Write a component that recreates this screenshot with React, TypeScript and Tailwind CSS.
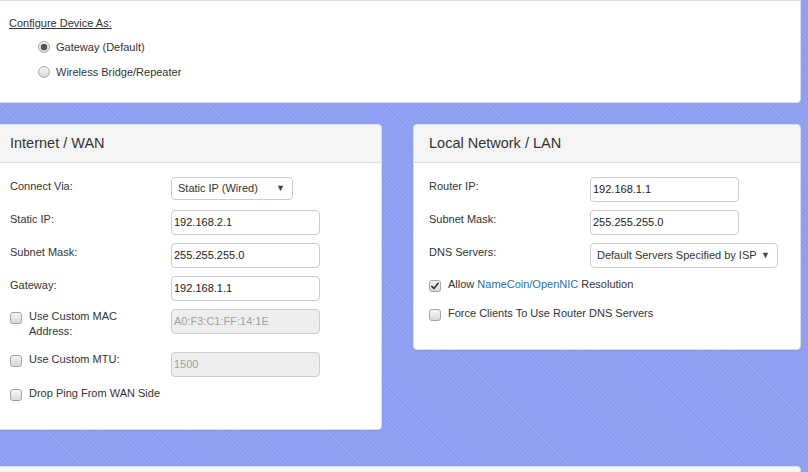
import type { ReactNode } from "react";

const Radio = ({ checked }: { checked?: boolean }) => (
  <span className="flex h-[12px] w-[12px] items-center justify-center rounded-full border border-[#a9a9a9] bg-[linear-gradient(#f4f4f4,#d9d9d9)] shadow-[inset_0_1px_1px_rgba(255,255,255,0.8)]">
    {checked && <span className="h-[6px] w-[6px] rounded-full bg-[#555] shadow-[0_0_1px_#333]" />}
  </span>
);

const Check = ({ checked }: { checked?: boolean }) => (
  <span className="flex h-[12px] w-[12px] shrink-0 items-center justify-center rounded-[3px] border border-[#a5a5a5] bg-[linear-gradient(#f5f5f5,#d9d9d9)]">
    {checked && (
      <svg viewBox="0 0 12 12" className="h-[10px] w-[10px]">
        <path d="M2.2 6.4 L4.8 9 L9.8 2.8" fill="none" stroke="#333" strokeWidth="2" strokeLinecap="round" strokeLinejoin="round" />
      </svg>
    )}
  </span>
);

const Input = ({ value, disabled, w = "w-[149px]" }: { value: string; disabled?: boolean; w?: string }) => (
  <div
    className={`${w} flex h-[25px] items-center rounded-[4px] border border-[#ccc] px-[2px] text-[11px] ${
      disabled ? "bg-[#eee] text-[#a0a0a0]" : "bg-white text-[#222]"
    }`}
  >
    {value}
  </div>
);

const Select = ({ value, w, h }: { value: string; w: string; h: string }) => (
  <div className={`${w} ${h} flex items-center justify-between rounded-[4px] border border-[#ccc] bg-white pl-[6px] pr-[7px] text-[11px] text-[#333]`}>
    <span>{value}</span>
    <span className="text-[9px] text-[#444]">▼</span>
  </div>
);

const Row = ({ label, h, children }: { label: ReactNode; h: string; children: ReactNode }) => (
  <div className={`flex ${h}`}>
    <div className="w-[161px] pt-[2px] leading-[15px]">{label}</div>
    {children}
  </div>
);

const CheckRow = ({ checked, h, children }: { checked?: boolean; h: string; children: ReactNode }) => (
  <div className={`flex ${h} gap-[7px]`}>
    <div className="pt-[3px]">
      <Check checked={checked} />
    </div>
    <div className="leading-[15px]">{children}</div>
  </div>
);

const Panel = ({ title, className, children }: { title: string; className: string; children: ReactNode }) => (
  <div className={`${className} rounded-[4px] border border-[#ddd] bg-white shadow-[0_1px_1px_rgba(0,0,0,0.05)]`}>
    <div className="flex h-[38px] items-center rounded-t-[4px] border-b border-[#ddd] bg-[#f5f5f5] px-[15px] text-[14.5px] text-[#333]">
      {title}
    </div>
    <div className="px-[15px]">{children}</div>
  </div>
);

export default function App() {
  return (
    <div className="h-[472px] w-[808px] overflow-hidden bg-[#8a9df0] bg-[image:repeating-linear-gradient(45deg,#899cef_0px,#899cef_1.5px,#92a4f2_1.5px,#92a4f2_3px)] font-['Liberation_Sans',Arial,sans-serif] text-[11px] text-[#333]">
      {/* device mode */}
      <div className="-ml-[6px] h-[103px] w-[807px] rounded-b-[4px] border border-[#ddd] bg-white pl-[14px] pt-[15px]">
        <div className="leading-[15px] underline">Configure Device As:</div>
        <div className="ml-[29px] mt-[8px] flex items-center gap-[6px]">
          <Radio checked />
          <span>Gateway (Default)</span>
        </div>
        <div className="ml-[29px] mt-[8px] flex items-center gap-[6px]">
          <Radio />
          <span>Wireless Bridge/Repeater</span>
        </div>
      </div>

      <div className="mt-[21px] flex items-start">
        <Panel title="Internet / WAN" className="-ml-[6px] h-[306px] w-[388px]">
          <div className="pt-[14px]">
            <Row label="Connect Via:" h="h-[33px]">
              <Select value="Static IP (Wired)" w="w-[122px]" h="h-[23px]" />
            </Row>
            <Row label="Static IP:" h="h-[33px]">
              <Input value="192.168.2.1" />
            </Row>
            <Row label="Subnet Mask:" h="h-[33px]">
              <Input value="255.255.255.0" />
            </Row>
            <Row label="Gateway:" h="h-[33px]">
              <Input value="192.168.1.1" />
            </Row>
            <div className="flex h-[43px]">
              <div className="w-[161px]">
                <CheckRow h="h-auto">
                  Use Custom MAC
                  <br />
                  Address:
                </CheckRow>
              </div>
              <Input value="A0:F3:C1:FF:14:1E" disabled />
            </div>
            <div className="flex h-[34px]">
              <div className="w-[161px]">
                <CheckRow h="h-auto">Use Custom MTU:</CheckRow>
              </div>
              <Input value="1500" disabled />
            </div>
            <CheckRow h="h-[20px]">Drop Ping From WAN Side</CheckRow>
          </div>
        </Panel>

        <Panel title="Local Network / LAN" className="ml-[31px] h-[226px] w-[388px]">
          <div className="pt-[14px]">
            <Row label="Router IP:" h="h-[33px]">
              <Input value="192.168.1.1" />
            </Row>
            <Row label="Subnet Mask:" h="h-[33px]">
              <Input value="255.255.255.0" />
            </Row>
            <Row label="DNS Servers:" h="h-[34px]">
              <Select value="Default Servers Specified by ISP" w="w-[188px]" h="h-[25px]" />
            </Row>
            <CheckRow checked h="h-[29px]">
              Allow <span className="text-[#2a6fb0]">NameCoin/OpenNIC</span> Resolution
            </CheckRow>
            <CheckRow h="h-[20px]">Force Clients To Use Router DNS Servers</CheckRow>
          </div>
        </Panel>
      </div>

      <div className="-ml-[6px] mt-[36px] h-[20px] w-[807px] rounded-t-[4px] border border-[#ddd] bg-[#f5f5f5]" />
    </div>
  );
}
